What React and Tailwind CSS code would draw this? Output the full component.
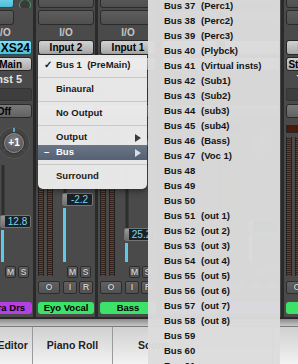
import React from "react";

const btnDark =
  "rounded-[3px] border border-[#2b2b2b] bg-[linear-gradient(#5d5d5d,#4f4f4f)]";
const btnLight =
  "rounded-[3px] border border-[#262626] bg-[linear-gradient(#d2d2d2,#a8a8a8)]";
const btnCyan =
  "rounded-[3px] border border-[#1f4f5a] bg-[linear-gradient(#86def2,#4dbdd7)]";
const meterCls =
  "w-[6px] border-x border-[#232323] bg-[repeating-linear-gradient(#74401f_0px,#74401f_1px,#35221a_1px,#35221a_2px)]";

function Knob({ text }) {
  return (
    <div className="relative w-[32px] h-[32px]">
      <svg width="32" height="32" viewBox="0 0 32 32">
        <defs>
          <radialGradient id="kg" cx="50%" cy="35%" r="70%">
            <stop offset="0" stopColor="#808080" />
            <stop offset="1" stopColor="#4e4e4e" />
          </radialGradient>
        </defs>
        <circle cx="16" cy="16" r="15.5" fill="#3a3a3a" stroke="#5a5a5a" strokeWidth="1" />
        <circle cx="16" cy="16" r="13" fill="none" stroke="#444" strokeWidth="3" />
        <line x1="5" y1="24" x2="8" y2="22" stroke="#555" strokeWidth="1" />
        <line x1="27" y1="24" x2="24" y2="22" stroke="#555" strokeWidth="1" />
        <circle cx="16" cy="16" r="9.5" fill="url(#kg)" stroke="#9a9a9a" strokeWidth="0.8" />
        <line x1="16" y1="1" x2="16" y2="5" stroke="#5ccbe8" strokeWidth="1.5" />
      </svg>
      {text && (
        <span className="absolute inset-0 flex items-center justify-center text-[10px] font-bold text-white leading-none">
          {text}
        </span>
      )}
    </div>
  );
}

function SmallBtn({ w, children, className = "" }) {
  return (
    <div
      className={`${w} h-[12px] flex items-center justify-center rounded-[2px] border border-[#2c2c2c] bg-[linear-gradient(#616161,#525252)] text-[9px] font-bold text-[#cdcdcd] leading-none [text-shadow:0_0_1px_#000] ${className}`}
    >
      {children}
    </div>
  );
}

function Strip({
  first,
  blank,
  io = "I/O",
  input,
  inputCls,
  main,
  mainCls,
  name,
  nameCls,
  off = "Off",
  pan,
  value,
  capTop,
  label,
  labelCls,
  oir = true,
}) {
  const trackH = capTop - 165;
  const fillH = 262 - (capTop + 15);
  const t = (s) => (blank ? "" : s);
  return (
    <div className="w-[62px] shrink-0 flex flex-col pl-[2px] pr-[1px] border-r-[3px] border-[#2a2a2a] bg-[#4a4a4a]">
      <div className="h-[8px] overflow-hidden flex items-end">
        {first ? (
          <>
            <div className={`w-[38px] h-[15px] shrink-0 ${btnCyan}`} />
            <div className="ml-[5px] w-[12px] h-[12px] mb-[-3px] shrink-0 rounded-full border border-[#3fa060] bg-[#3a3a3a]" />
          </>
        ) : (
          <div className={`w-full h-[15px] shrink-0 ${btnDark}`} />
        )}
      </div>
      <div className={`mt-[2px] h-[15px] ${first ? "w-[38px]" : "w-full"} ${btnDark}`} />
      <div className="h-[15px] flex items-center justify-center text-[10px] font-bold text-[#c6c6c6]">
        {t(io)}
      </div>
      <div
        className={`h-[15px] flex items-center text-[10px] font-bold text-black whitespace-nowrap overflow-hidden ${inputCls}`}
      >
        {t(input)}
      </div>
      <div
        className={`mt-[2px] h-[14px] flex items-center text-[10px] font-bold text-black whitespace-nowrap overflow-hidden ${btnLight} ${mainCls}`}
      >
        {t(main)}
      </div>
      <div
        className={`h-[16px] flex items-center font-bold text-[#e4e4e4] whitespace-nowrap overflow-hidden ${nameCls}`}
      >
        {t(name)}
      </div>
      <div className="mt-[1px] h-[13px] rounded-[2px] border border-[#353535] bg-[#3e3e3e]" />
      <div className="mt-[3px] h-[14px] flex items-center justify-center rounded-[3px] border border-[#2a2a2a] bg-[linear-gradient(#7a7a7a,#626262)] text-[10px] font-bold text-black">
        {t(off)}
      </div>
      <div className="h-[160px] flex">
        <div className="w-[15px] flex flex-col mb-[2px]">
          <div className="mt-[7px] h-[8px] border border-[#262626] bg-[#4a1b09]" />
          <div className="mt-[4px] flex-1 flex gap-[3px]">
            <div className={meterCls} />
            <div className={meterCls} />
          </div>
        </div>
        <div className="ml-[3px] w-[38px] flex flex-col">
          <div className="mt-[9px] ml-[4px]">
            <Knob text={pan} />
          </div>
          <div className="mt-[6px] ml-[6px] w-[31px] flex flex-col">
            <div
              className="ml-[1px] w-[4px] bg-[#2e2e2e] border-x border-[#3a3a3a]"
              style={{ height: trackH }}
            />
            <div className="h-[13px] flex rounded-[2px] border border-[#747474] bg-[#1b2226]">
              <div className="w-[4px] bg-[linear-gradient(#9a9a9a,#6e6e6e)]" />
              <div className="flex-1 flex items-center justify-center text-[10px] text-[#78d6f4] leading-none">
                {t(value)}
              </div>
            </div>
            <div
              className="mt-[2px] ml-[1px] w-[3px] bg-[#5fc8e8]"
              style={{ height: fillH }}
            />
          </div>
          <div className="mt-[4px] ml-[11px] flex gap-[2px]">
            <SmallBtn w="w-[11px]">{t("M")}</SmallBtn>
            <SmallBtn w="w-[11px]">{t("S")}</SmallBtn>
          </div>
        </div>
      </div>
      <div className={`mt-[3px] h-[13px] flex ${oir ? "" : "invisible"}`}>
        <SmallBtn w="w-[22px] h-[13px]">{oir ? t("O") : ""}</SmallBtn>
        <SmallBtn w="w-[14px] h-[13px]" className="ml-[3px]">
          {oir ? t("I") : ""}
        </SmallBtn>
        <SmallBtn w="w-[14px] h-[13px]" className="ml-[2px]">
          {oir ? t("R") : ""}
        </SmallBtn>
      </div>
      <div
        className={`mt-[8px] h-[12px] rounded-[3px] flex items-center justify-center text-[9.5px] font-bold text-black whitespace-nowrap overflow-hidden ${labelCls}`}
      >
        {t(label)}
      </div>
    </div>
  );
}

function Arrow({ light }) {
  return (
    <svg width="6" height="8" viewBox="0 0 6 8">
      <path d="M0 0 L6 4 L0 8 Z" fill={light ? "#d8dde6" : "#3a3a3a"} />
    </svg>
  );
}

function MenuItem({ mark, children, arrow, hi }) {
  return (
    <div
      className={`h-[15px] flex items-center pl-[6px] pr-[6px] ${
        hi ? "bg-[linear-gradient(#6b7688,#566073)] text-white" : ""
      }`}
    >
      <span className="w-[12px]">{mark}</span>
      <span className="flex-1 whitespace-pre">{children}</span>
      {arrow && <Arrow light={hi} />}
    </div>
  );
}

function Sep() {
  return (
    <div className="h-[9px] flex items-center">
      <div className="h-px w-full bg-[#c8c8c8]" />
    </div>
  );
}

const buses = [
  [37, "(Perc1)"],
  [38, "(Perc2)"],
  [39, "(Perc3)"],
  [40, "(Plybck)"],
  [41, "(Virtual insts)"],
  [42, "(Sub1)"],
  [43, "(Sub2)"],
  [44, "(sub3)"],
  [45, "(sub4)"],
  [46, "(Bass)"],
  [47, "(Voc 1)"],
  [48, ""],
  [49, ""],
  [50, ""],
  [51, "(out 1)"],
  [52, "(out 2)"],
  [53, "(out 3)"],
  [54, "(out 4)"],
  [55, "(out 5)"],
  [56, "(out 6)"],
  [57, "(out 7)"],
  [58, "(out 8)"],
  [59, ""],
  [60, ""],
  [61, ""],
];

export default function App() {
  return (
    <div className="relative w-[298px] h-[364px] overflow-hidden bg-[#4a4a4a] font-['Liberation_Sans',Arial,sans-serif]">
      <div className="flex -ml-[26px] h-[317px] overflow-hidden">
        <Strip
          first
          input="XS24"
          inputCls={`${btnCyan} justify-end pr-[1px] text-[12px]`}
          main="Main"
          mainCls="justify-end pr-[9px]"
          name="Inst 5"
          nameCls="justify-end pr-[10px] text-[11px]"
          pan="+1"
          value="12.8"
          capTop={215}
          label="Extra Drs"
          labelCls="bg-[#b43fe2]"
          oir={false}
        />
        <Strip
          input="Input 2"
          inputCls={`${btnLight} justify-center`}
          main=""
          mainCls="justify-center"
          name=""
          nameCls="justify-center text-[10px]"
          off=""
          value="-2.2"
          capTop={193}
          label="Eyo Vocal"
          labelCls="bg-[#3de368]"
        />
        <Strip
          input="Input 1"
          inputCls={`${btnLight} justify-center`}
          main=""
          mainCls="justify-center"
          name=""
          nameCls="justify-center text-[10px]"
          off=""
          value="25.2"
          capTop={228}
          label="Bass"
          labelCls="bg-[#3de368]"
        />
        <Strip
          blank
          inputCls={`${btnLight} justify-center`}
          mainCls="justify-center"
          nameCls="justify-center text-[10px]"
          capTop={210}
          labelCls="bg-[#7474e4]"
        />
        <Strip
          blank
          inputCls={`${btnLight} justify-center`}
          mainCls="justify-center"
          nameCls="justify-center text-[10px]"
          capTop={220}
          labelCls="bg-[#7474e4]"
        />
        <Strip
          io=""
          input="Input 5"
          inputCls={`${btnLight} justify-center`}
          main="Stereo Out"
          mainCls="justify-center"
          name="Track 9"
          nameCls="justify-center text-[10px]"
          value="0.0"
          capTop={205}
          label="Gtr"
          labelCls="bg-[#3de368]"
        />
      </div>

      <div className="h-[2px] bg-[#2a2a2a]" />
      <div className="h-[7px] bg-[linear-gradient(#8a8a8a,#c6c6c6)]" />
      <div className="h-[38px] flex -ml-[47px] border-t border-[#7a7a7a] bg-[linear-gradient(#d0d0d0,#f2f2f2)]">
        {["Sample Editor", "Piano Roll", "Score", ""].map((tx, i) => (
          <div
            key={i}
            className="w-[80px] shrink-0 flex items-center justify-center border-r border-[#9a9a9a] text-[10.5px] font-bold text-[#222] whitespace-nowrap"
          >
            {tx}
          </div>
        ))}
      </div>

      <div className="absolute left-[38px] top-[55px] w-[109px] pt-[3px] pb-[5px] rounded-b-[5px] bg-[rgba(236,236,236,0.97)] shadow-[0_2px_6px_rgba(0,0,0,0.45)] text-[9.5px] font-bold text-[#1a1a1a]">
        <MenuItem mark="✓">{"Bus 1  (PreMain)"}</MenuItem>
        <Sep />
        <MenuItem>Binaural</MenuItem>
        <Sep />
        <MenuItem>No Output</MenuItem>
        <Sep />
        <MenuItem arrow>Output</MenuItem>
        <MenuItem mark="–" arrow hi>
          Bus
        </MenuItem>
        <Sep />
        <MenuItem>Surround</MenuItem>
      </div>

      <div className="absolute left-[148px] top-0 w-[132px] h-[364px] bg-[rgba(220,220,220,0.97)] text-[9.5px] font-bold text-[#141414]">
        <div className="-mt-[1px]">
          {buses.map(([n, tx]) => (
            <div key={n} className="h-[15px] flex items-center pl-[16px] whitespace-nowrap">
              <span className="w-[37px]">Bus {n}</span>
              <span>{tx}</span>
            </div>
          ))}
        </div>
      </div>
    </div>
  );
}
